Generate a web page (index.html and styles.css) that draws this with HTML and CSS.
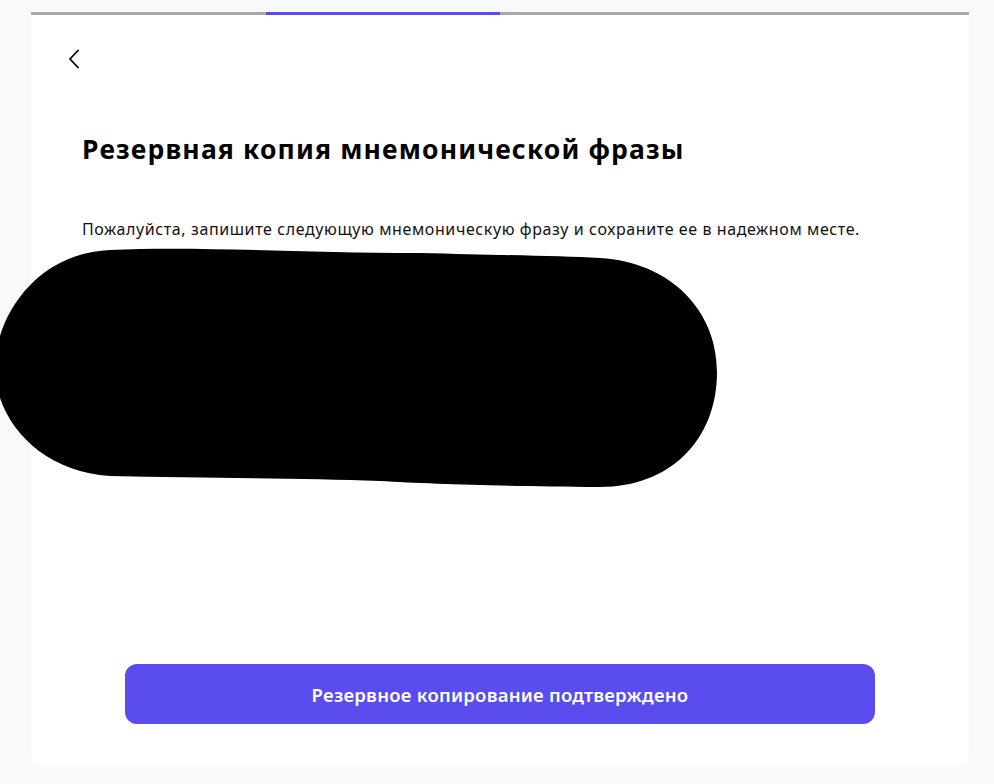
FILE: index.html
```html
<!DOCTYPE html>
<html lang="ru">
<head>
<meta charset="utf-8">
<title>Резервная копия мнемонической фразы</title>
<link rel="stylesheet" href="styles.css">
</head>
<body>
<div class="page">
  <main class="card">
    <div class="progress">
      <span class="seg"></span>
      <span class="seg active"></span>
      <span class="seg"></span>
      <span class="seg"></span>
    </div>
    <div class="content">
      <button class="back" aria-label="Назад">
        <svg width="14" height="20" viewBox="0 0 14 20"><path d="M11 1.5 L3 10 L11 18.5" fill="none" stroke="#000" stroke-width="1.8" stroke-linecap="round" stroke-linejoin="round"/></svg>
      </button>
      <h1 class="title">Резервная копия мнемонической фразы</h1>
      <p class="desc">Пожалуйста, запишите следующую мнемоническую фразу и сохраните ее в надежном месте.</p>
      <div class="words"></div>
      <div class="actions">
        <button class="primary">Резервное копирование подтверждено</button>
      </div>
    </div>
  </main>
  <svg class="redact" width="730" height="250" viewBox="-10 245 730 250" aria-hidden="true">
    <path d="M110 250 C200 246 300 253 420 253 C500 255 560 256 600 258 C670 262 717 310 717 372 C717 440 670 487 600 487 C500 486 430 484 380 481 C300 478 200 478 110 476 C40 472 -5 420 -5 368 C-5 318 35 253 110 250 Z" fill="#000"/>
  </svg>
</div>
</body>
</html>
```

FILE: styles.css
```css
html, body {
  margin: 0;
  padding: 0;
}
body {
  background: #f8f9fb;
  font-family: "Noto Sans", "Open Sans", "Liberation Sans", sans-serif;
  color: #000;
}
.page {
  position: relative;
  width: 994px;
  height: 784px;
  box-sizing: border-box;
  padding: 12px 25px 19px 31px;
}
.card {
  background: #fff;
  height: 100%;
  border-radius: 0 0 10px 10px;
  display: flex;
  flex-direction: column;
}
.progress {
  display: flex;
  height: 3px;
}
.seg {
  flex: 1;
  background: #a8a8aa;
}
.seg.active {
  background: #5b4cf0;
}
.content {
  flex: 1;
  display: flex;
  flex-direction: column;
  padding: 0 51px 41px 51px;
}
.back {
  background: none;
  border: 0;
  padding: 0;
  margin: 34px 0 0 -15px;
  width: 14px;
  height: 20px;
  cursor: pointer;
  display: block;
}
.back svg {
  display: block;
}
.title {
  margin: 63px 0 0 0;
  font-size: 26.5px;
  font-weight: 700;
  line-height: 34px;
  letter-spacing: 1.15px;
}
.desc {
  margin: 52px 0 0 0;
  font-size: 16px;
  line-height: 22px;
  color: #111;
  letter-spacing: 0.6px;
}
.words {
  flex: 1;
}
.actions {
  display: flex;
  justify-content: center;
}
.primary {
  width: 750px;
  height: 60px;
  border: 0;
  border-radius: 12px;
  background: #5b4cf0;
  color: #fff;
  font-family: inherit;
  font-size: 18.5px;
  font-weight: 600;
  letter-spacing: 0.25px;
  cursor: pointer;
}
.redact {
  position: absolute;
  left: -10px;
  top: 245px;
}
```
